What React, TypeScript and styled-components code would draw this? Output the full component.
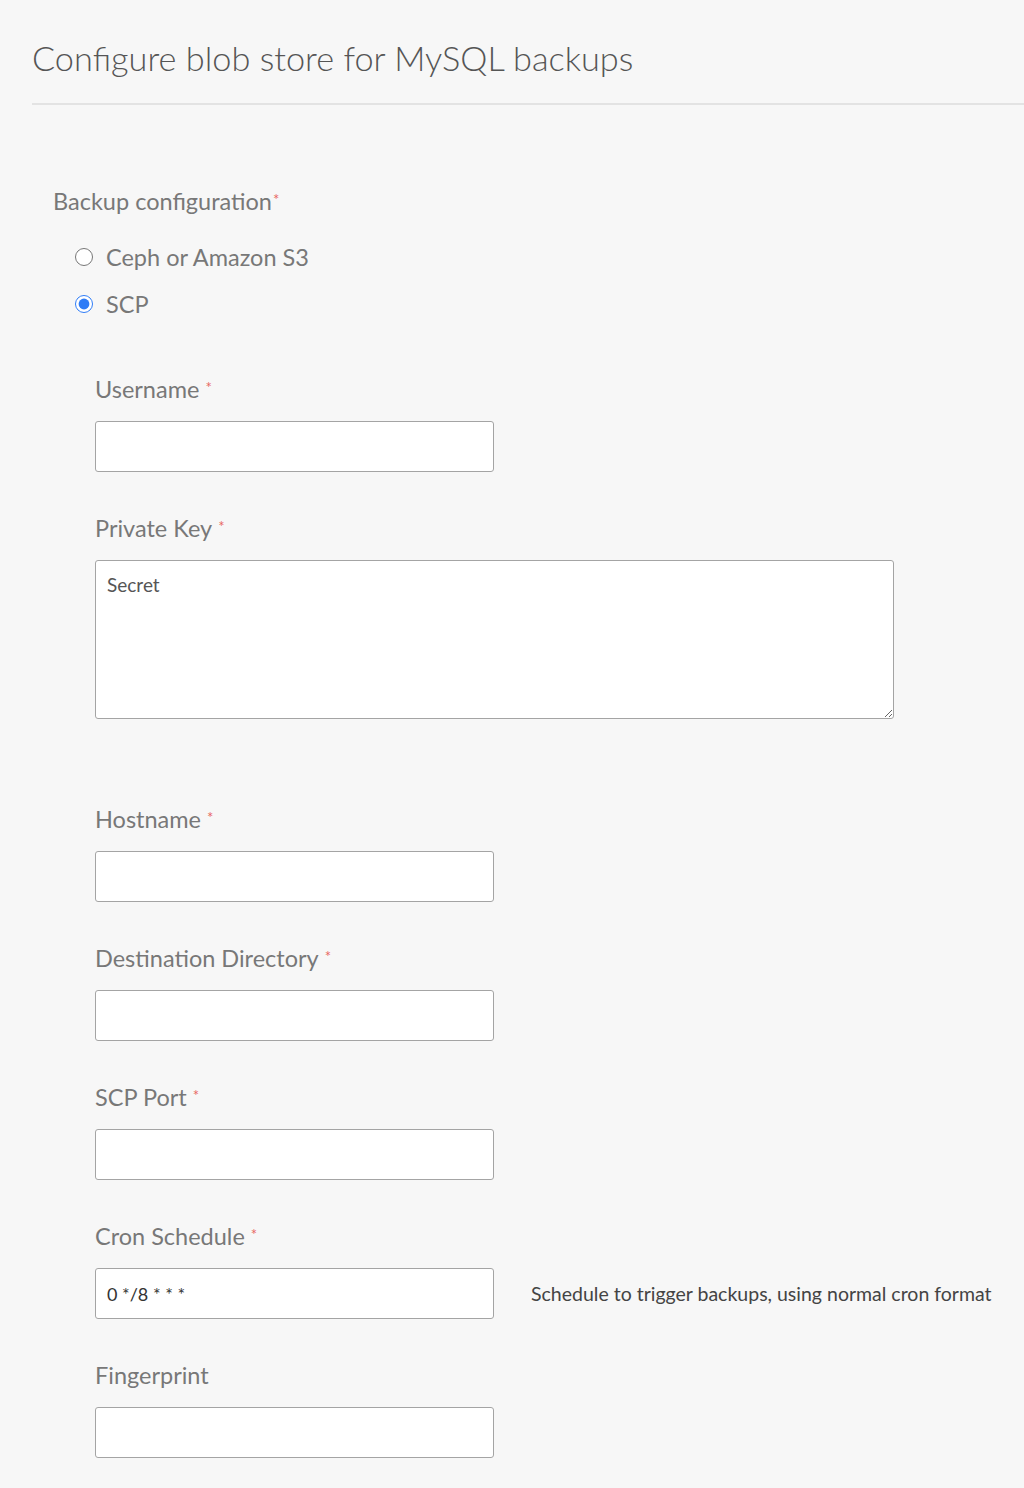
import React, { useState } from "react";
import styled, { createGlobalStyle } from "styled-components";

const GlobalStyle = createGlobalStyle`
  html, body {
    margin: 0;
    padding: 0;
    background: #f7f7f7;
  }
  body {
    font-family: Lato, "Open Sans", sans-serif;
    color: #555;
  }
`;

type Field = {
  label: string;
  required?: boolean;
  value?: string;
  help?: string;
};

const fields: Field[] = [
  { label: "Hostname", required: true },
  { label: "Destination Directory", required: true },
  { label: "SCP Port", required: true },
  {
    label: "Cron Schedule",
    required: true,
    value: "0 */8 * * *",
    help: "Schedule to trigger backups, using normal cron format",
  },
  { label: "Fingerprint" },
];

const App = () => {
  const [mode, setMode] = useState<"s3" | "scp">("scp");

  return (
    <>
      <GlobalStyle />
      <Page>
        <Header>
          <Title>Configure blob store for MySQL backups</Title>
        </Header>

        <Form>
          <GroupLabel>
            Backup configuration<Star $tight>*</Star>
          </GroupLabel>

          <RadioList>
            <RadioRow>
              <Radio
                type="radio"
                name="backup"
                checked={mode === "s3"}
                onChange={() => setMode("s3")}
              />
              <RadioText>Ceph or Amazon S3</RadioText>
            </RadioRow>
            <RadioRow>
              <Radio
                type="radio"
                name="backup"
                checked={mode === "scp"}
                onChange={() => setMode("scp")}
              />
              <RadioText>SCP</RadioText>
            </RadioRow>
          </RadioList>

          <Fields>
            <FieldBlock>
              <Label>
                Username<Star>*</Star>
              </Label>
              <TextInput type="text" />
            </FieldBlock>

            <FieldBlock $gapAfter={88}>
              <Label>
                Private Key<Star>*</Star>
              </Label>
              <SecretArea placeholder="Secret" />
            </FieldBlock>

            {fields.map((f) => (
              <FieldBlock key={f.label}>
                <Label>
                  {f.label}
                  {f.required && <Star>*</Star>}
                </Label>
                <InputRow>
                  <TextInput type="text" defaultValue={f.value} />
                  {f.help && <Help>{f.help}</Help>}
                </InputRow>
              </FieldBlock>
            ))}
          </Fields>
        </Form>
      </Page>
    </>
  );
};

export default App;

const Page = styled.div`
  padding-left: 32px;
  height: 1488px;
  overflow: hidden;
`;

const Header = styled.div`
  height: 103px;
  border-bottom: 2px solid #e3e3e3;
  display: flex;
  align-items: center;
`;

const Title = styled.h1`
  margin: 0;
  padding-top: 12px;
  font-size: 34.3px;
  font-weight: 300;
  color: #555;
`;

const Form = styled.div`
  padding: 81px 0 0 21px;
`;

const GroupLabel = styled.div`
  font-size: 23.5px;
  color: #787878;
  line-height: 30px;
`;

const Star = styled.span<{ $tight?: boolean }>`
  color: #e8675f;
  font-size: 15px;
  vertical-align: top;
  margin-left: ${(p) => (p.$tight ? "1px" : "6px")};
  position: relative;
  top: -2px;
`;

const RadioList = styled.div`
  display: flex;
  flex-direction: column;
  gap: 17px;
  padding: 26px 0 0 22px;
`;

const RadioRow = styled.label`
  display: flex;
  align-items: center;
  gap: 13px;
  height: 30px;
  cursor: pointer;
`;

const Radio = styled.input`
  width: 18px;
  height: 18px;
  margin: 0;
  accent-color: #2f7cf6;
`;

const RadioText = styled.span`
  font-size: 23.5px;
  color: #787878;
`;

const Fields = styled.div`
  padding: 58px 0 0 42px;
  display: flex;
  flex-direction: column;
`;

const FieldBlock = styled.div<{ $gapAfter?: number }>`
  display: flex;
  flex-direction: column;
  gap: 20px;
  margin-bottom: ${(p) => p.$gapAfter ?? 44}px;
`;

const Label = styled.div`
  font-size: 23.5px;
  line-height: 24px;
  color: #787878;
`;

const InputRow = styled.div`
  display: flex;
  align-items: center;
  gap: 37px;
`;

const TextInput = styled.input`
  box-sizing: border-box;
  width: 399px;
  height: 51px;
  border: 1px solid #a4a4a4;
  border-radius: 3px;
  background: #fff;
  padding: 0 11px;
  font-family: Lato, sans-serif;
  font-size: 18px;
  color: #333;
  outline: none;
`;

const SecretArea = styled.textarea`
  box-sizing: border-box;
  width: 799px;
  height: 159px;
  border: 1px solid #a4a4a4;
  border-radius: 3px;
  background: #fff;
  padding: 12px 11px;
  font-family: Lato, sans-serif;
  font-size: 19px;
  color: #333;
  outline: none;
  resize: vertical;

  &::placeholder {
    color: #555;
  }
`;

const Help = styled.span`
  font-size: 19.5px;
  color: #444;
`;
